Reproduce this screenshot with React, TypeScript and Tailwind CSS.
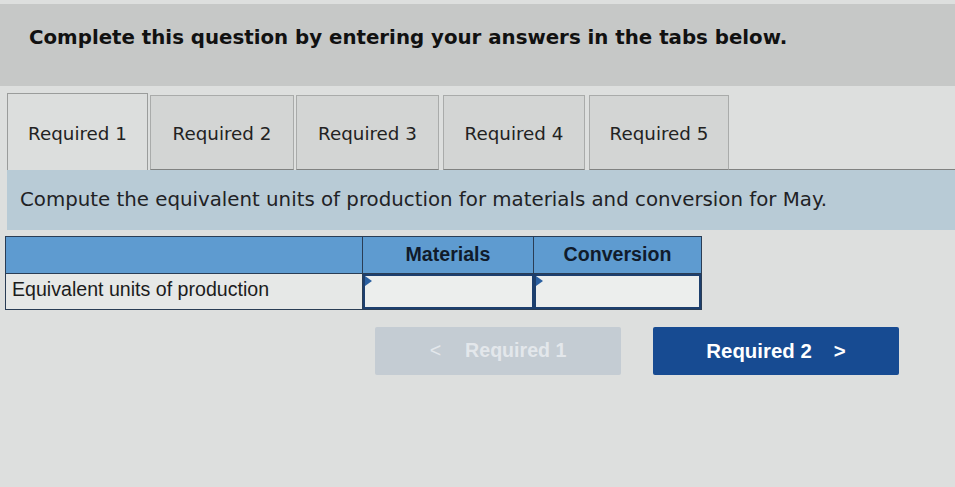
import React from "react";

const tabs = [
  { label: "Required 1", w: "w-[141px]", ml: "", active: true },
  { label: "Required 2", w: "w-[144px]", ml: "ml-[2px]", active: false },
  { label: "Required 3", w: "w-[143px]", ml: "ml-[2px]", active: false },
  { label: "Required 4", w: "w-[142px]", ml: "ml-[4px]", active: false },
  { label: "Required 5", w: "w-[140px]", ml: "ml-[4px]", active: false },
];

function InputCell({ w }: { w: string }) {
  return (
    <div className={`relative ${w} h-full border-2 border-[#1d3f6e] bg-[#eceeed]`}>
      <svg className="absolute left-0 top-0" width="8" height="10" viewBox="0 0 8 10">
        <path d="M0 0 L7 5 L0 10 Z" fill="#2a5fa0" />
      </svg>
    </div>
  );
}

export default function App() {
  return (
    <div
      className="w-[955px] h-[487px] overflow-hidden bg-[#dddfde] text-[#1d1d1d]"
      style={{ fontFamily: '"DejaVu Sans", Verdana, sans-serif' }}
    >
      <div className="mt-[4px] h-[82px] bg-[#c6c8c7] pl-[29px] pt-[22px]">
        <p className="text-[19.8px] font-bold leading-[24px] text-[#111] whitespace-nowrap">
          Complete this question by entering your answers in the tabs below.
        </p>
      </div>

      <div className="mt-[7px] flex items-end pl-[7px]">
        {tabs.map((t) =>
          t.active ? (
            <div
              key={t.label}
              className={`${t.w} h-[77px] flex items-center justify-center border border-b-0 border-[#9a9c9b] bg-[#dcdedd] pt-[3px] text-[18.3px] text-[#222]`}
            >
              {t.label}
            </div>
          ) : (
            <div
              key={t.label}
              className={`${t.w} ${t.ml} h-[75px] flex items-center justify-center border border-[#a9abaa] border-b-[#808281] bg-[#d3d5d4] pt-[3px] text-[18.3px] text-[#222]`}
            >
              {t.label}
            </div>
          )
        )}
        <div className="flex-1 h-[1px] bg-[#808281]" />
      </div>

      <div className="ml-[7px] h-[60px] flex items-center bg-[#b8cbd6] pl-[13px]">
        <p className="text-[19.8px] text-[#1f2225] whitespace-nowrap">
          Compute the equivalent units of production for materials and conversion for May.
        </p>
      </div>

      <div
        className="ml-[5px] mt-[6px] w-[697px] border border-[#2a3d55]"
        style={{ fontFamily: '"Liberation Sans", Arial, sans-serif' }}
      >
        <div className="flex h-[36px] bg-[#5e9bd0]">
          <div className="w-[357px] border-r border-[#2a3d55]" />
          <div className="w-[171px] border-r border-[#2a3d55] flex items-center justify-center text-[19.6px] font-bold text-[#101b2b]">
            Materials
          </div>
          <div className="flex-1 flex items-center justify-center text-[19.6px] font-bold text-[#101b2b]">
            Conversion
          </div>
        </div>
        <div className="flex h-[36px] border-t border-[#2a3d55] bg-[#e6e8e7]">
          <div className="w-[357px] border-r border-[#2a3d55] flex items-center pl-[6px] pb-[4px] text-[19.6px] text-[#1c1c1c]">
            Equivalent units of production
          </div>
          <InputCell w="w-[171px]" />
          <InputCell w="flex-1" />
        </div>
      </div>

      <div
        className="mt-[17px] flex gap-[32px] pl-[375px]"
        style={{ fontFamily: '"Liberation Sans", Arial, sans-serif' }}
      >
        <div className="w-[246px] h-[48px] rounded-[2px] bg-[#c4ccd3] flex items-center justify-center gap-[24px] text-[19.6px] font-bold text-[#e3e7eb]">
          <span className="font-normal">&lt;</span>
          <span>Required 1</span>
        </div>
        <div className="w-[246px] h-[48px] rounded-[2px] bg-[#174b92] flex items-center justify-center gap-[22px] text-[20.4px] font-bold text-white">
          <span>Required 2</span>
          <span>&gt;</span>
        </div>
      </div>
    </div>
  );
}
